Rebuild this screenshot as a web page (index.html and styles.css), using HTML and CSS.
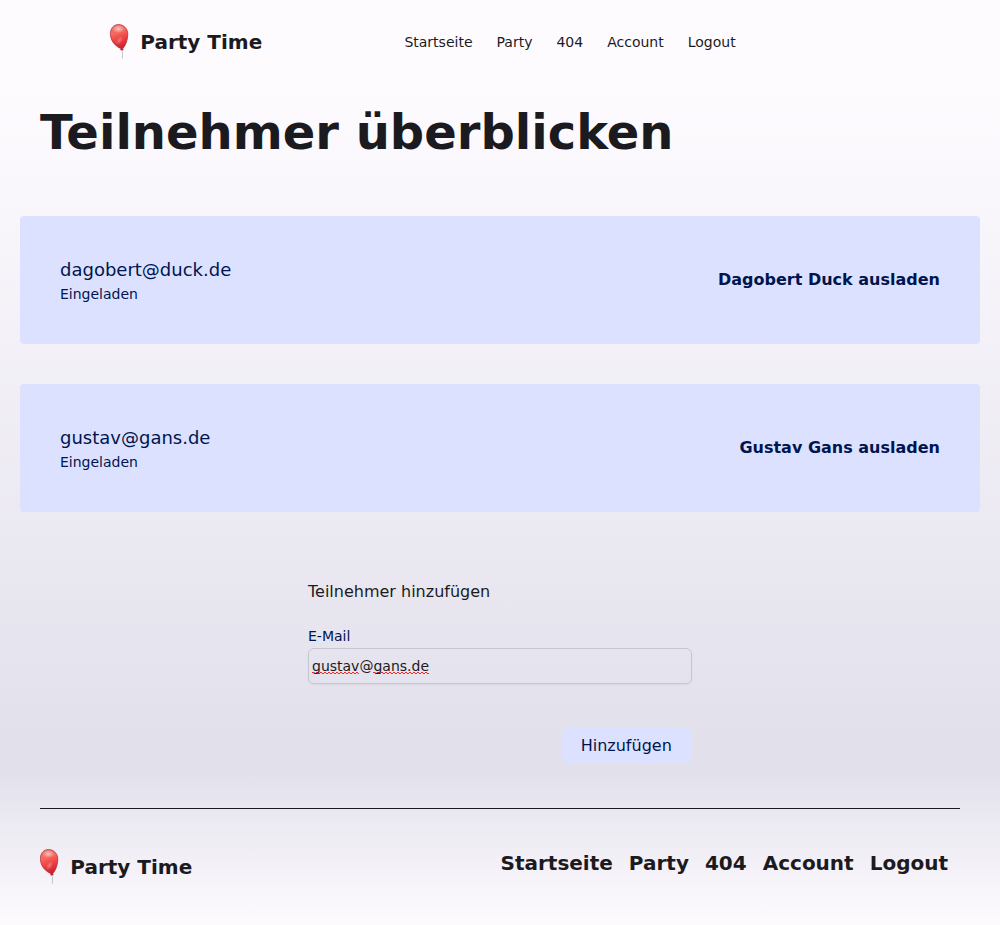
FILE: index.html
```html
<!DOCTYPE html>
<html lang="de">
<head>
<meta charset="utf-8">
<title>Party Time</title>
<link rel="stylesheet" href="styles.css">
</head>
<body>
<svg class="defs" width="0" height="0" aria-hidden="true">
  <defs>
    <linearGradient id="rubber" x1="0.35" y1="0" x2="0.6" y2="1">
      <stop offset="0" stop-color="#e87870"/>
      <stop offset="0.3" stop-color="#f8685e"/>
      <stop offset="0.55" stop-color="#ee4644"/>
      <stop offset="1" stop-color="#c8182a"/>
    </linearGradient>
    <radialGradient id="shine">
      <stop offset="0" stop-color="#fff" stop-opacity=".6"/>
      <stop offset="1" stop-color="#fff" stop-opacity="0"/>
    </radialGradient>
    <symbol id="balloon" viewBox="0 0 20 36">
      <path d="M12 26.500c1 3 .5 3.500 .3 8" fill="none" stroke="#c4c1c8" stroke-width="1"/>
      <path d="M8.500 .5C3.500 .5 .4 4.500 .4 9.500 .4 17 5 22 11.300 24.800l-.7 1.200h2.600l-.5-1.200C16 21 17.800 15.500 17.800 10 17.800 4.500 13.500 .5 8.500 .5Z" fill="url(#rubber)" stroke="#b02434" stroke-width=".7"/>
      <ellipse cx="8.500" cy="5" rx="6" ry="4" fill="url(#shine)"/>
      <ellipse cx="9.500" cy="16.500" rx="3" ry="5" transform="rotate(35 9.500 16.500)" fill="url(#shine)" opacity=".5"/>
    </symbol>
  </defs>
</svg>
<header class="header">
  <a class="brand"><svg class="balloon"><use href="#balloon"/></svg><span>Party Time</span></a>
  <nav class="nav"><a>Startseite</a><a>Party</a><a>404</a><a>Account</a><a>Logout</a></nav>
</header>
<main>
  <h1 class="title">Teilnehmer überblicken</h1>
  <ul class="guests">
    <li class="guest">
      <div><p class="guest-mail">dagobert@duck.de</p><p class="guest-state">Eingeladen</p></div>
      <button class="uninvite">Dagobert Duck ausladen</button>
    </li>
    <li class="guest">
      <div><p class="guest-mail">gustav@gans.de</p><p class="guest-state">Eingeladen</p></div>
      <button class="uninvite">Gustav Gans ausladen</button>
    </li>
  </ul>
  <form class="form">
    <p class="form-title">Teilnehmer hinzufügen</p>
    <label class="label">E-Mail</label>
    <div class="field"><span class="typo">gustav</span>@<span class="typo">gans.de</span></div>
    <button class="submit" type="button">Hinzufügen</button>
  </form>
</main>
<footer class="footer">
  <a class="brand"><svg class="balloon"><use href="#balloon"/></svg><span>Party Time</span></a>
  <nav class="footer-nav"><a>Startseite</a><a>Party</a><a>404</a><a>Account</a><a>Logout</a></nav>
</footer>
</body>
</html>
```
FILE: styles.css
```css
* { box-sizing: border-box; margin: 0; padding: 0; }
body {
  height: 925px;
  font-family: "DejaVu Sans", sans-serif;
  font-size: 16px;
  line-height: 24px;
  color: #1b1b1f;
  background: linear-gradient(#fefbff 0, #fefbff 90px, #e2e0eb 740px, #e2e0eb 770px, #fefbff 925px);
}
.defs { position: absolute; }
.header { display: grid; grid-template-columns: 294.4px 1fr; align-items: center; height: 84px; padding-left: 110px; }
.brand { display: flex; align-items: center; gap: 10.300px; font-size: 20px; font-weight: 700; line-height: 28px; }
.balloon { width: 20px; height: 36px; }
.nav { display: flex; gap: 24px; font-size: 14px; line-height: 20px; }
.title { padding: 20px 40px 0; font-size: 48px; line-height: 56px; }
.guests { display: grid; gap: 40px; padding: 56px 20px 0; list-style: none; }
.guest { display: flex; justify-content: space-between; align-items: center; height: 128px; padding: 0 40px; border-radius: 4px; background: #dce1ff; color: #00154f; }
.guest-mail { font-size: 18px; line-height: 28px; }
.guest-state { font-size: 14px; line-height: 20px; }
button { border: 0; background: none; font: inherit; color: #00154f; }
.guest .uninvite { font-weight: 700; }
.form { display: flex; flex-direction: column; width: 384px; margin: 68px auto 0; }
.label { margin-top: 22px; font-size: 14px; line-height: 20px; color: #00154f; }
.field { height: 36px; margin-top: 2px; padding: 0 3px; border: 1px solid #c6c5d0; border-radius: 6px; box-shadow: 0 1px 2px rgb(0 0 0 / 5%); font-size: 14px; line-height: 34px; }
/* Two offset dotted rows form the spell-check squiggle. */
.typo {
  background:
    linear-gradient(90deg, #f22 2px, transparent 2px) 0 calc(100% - 1px) / 4px 1px repeat-x,
    linear-gradient(90deg, #f22 2px, transparent 2px) 2px 100% / 4px 1px repeat-x;
}
.form .submit { align-self: flex-end; width: 130.500px; height: 36px; margin-top: 44px; padding-right: 1px; border-radius: 6px; background: #dce1ff; }
.footer { display: flex; justify-content: space-between; margin: 44px 40px 0; padding-top: 40px; border-top: 1px solid #1b1b1f; }
.footer-nav { display: flex; gap: 16px; padding-right: 12px; font-size: 20px; font-weight: 700; line-height: 28px; }
```
